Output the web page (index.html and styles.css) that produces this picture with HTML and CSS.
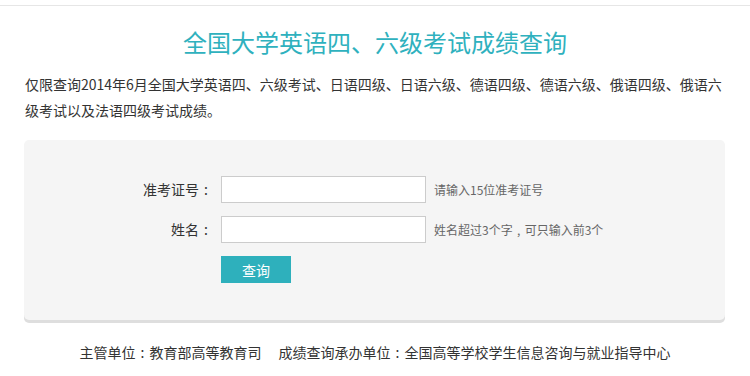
FILE: index.html
```html
<!DOCTYPE html>
<html lang="zh-CN">
<head>
<meta charset="utf-8">
<title>全国大学英语四、六级考试成绩查询</title>
<link rel="stylesheet" href="styles.css">
</head>
<body>
<div class="topbar"></div>
<div class="container">
  <h1 class="title">全国大学英语四、六级考试成绩查询</h1>
  <p class="intro">仅限查询2014年6月全国大学英语四、六级考试、日语四级、日语六级、德语四级、德语六级、俄语四级、俄语六级考试以及法语四级考试成绩。</p>
  <div class="panel">
    <form class="form">
      <label class="label" for="zkzh">准考证号<span class="punc">:</span></label>
      <input class="field" id="zkzh" type="text">
      <span class="hint">请输入15位准考证号</span>
      <label class="label" for="xm">姓名<span class="punc">:</span></label>
      <input class="field" id="xm" type="text">
      <span class="hint">姓名超过3个字<span class="punc">,</span>可只输入前3个</span>
      <span class="label"></span>
      <button class="btn" type="button">查询</button>
    </form>
  </div>
  <p class="footer"><span class="unit">主管单位<span class="punc">:</span>教育部高等教育司</span><span>成绩查询承办单位<span class="punc">:</span>全国高等学校学生信息咨询与就业指导中心</span></p>
</div>
</body>
</html>
```

FILE: styles.css
```css
html, body {
  margin: 0;
  padding: 0;
  background: #fff;
}
body {
  font-family: "Noto Sans CJK SC", "Noto Sans", sans-serif;
  color: #333;
  font-size: 14px;
}
.punc {
  display: inline-block;
  width: 1em;
  text-align: center;
}
.topbar {
  height: 5px;
  border-bottom: 1px solid #e6e6e6;
}
.container {
  width: 700px;
  margin: 0 auto;
}
.title {
  margin: 21px 0 0;
  font-size: 24px;
  line-height: 30px;
  font-weight: normal;
  color: #2fb1be;
  text-align: center;
}
.intro {
  margin: 14px 0 0;
  line-height: 26px;
  font-size: 14px;
}
.panel {
  margin: 17px 0 0 -1px;
  background: #f5f5f5;
  border-radius: 5px;
  box-shadow: 0 3px 0 #dedede;
  padding: 36px 0 37px;
}
.form {
  display: grid;
  grid-template-columns: 189px 205px auto;
  column-gap: 8px;
  row-gap: 13px;
  align-items: center;
}
.label {
  text-align: right;
  font-size: 14px;
  line-height: 27px;
  color: #333;
}
.field {
  box-sizing: border-box;
  width: 205px;
  height: 27px;
  margin: 0;
  border: 1px solid #cccccc;
  background: #fff;
  padding: 0 4px;
  font-family: inherit;
}
.hint {
  font-size: 12px;
  color: #666;
}
.btn {
  width: 70px;
  height: 27px;
  margin: 0;
  border: 0;
  background: #2eb0bc;
  color: #fff;
  font-family: inherit;
  font-size: 14px;
  padding: 0;
  cursor: pointer;
}
.footer {
  margin: 22px 0 0;
  text-align: center;
  line-height: 20px;
  font-size: 14px;
  color: #333;
}
.unit {
  margin-right: 17px;
}
```
